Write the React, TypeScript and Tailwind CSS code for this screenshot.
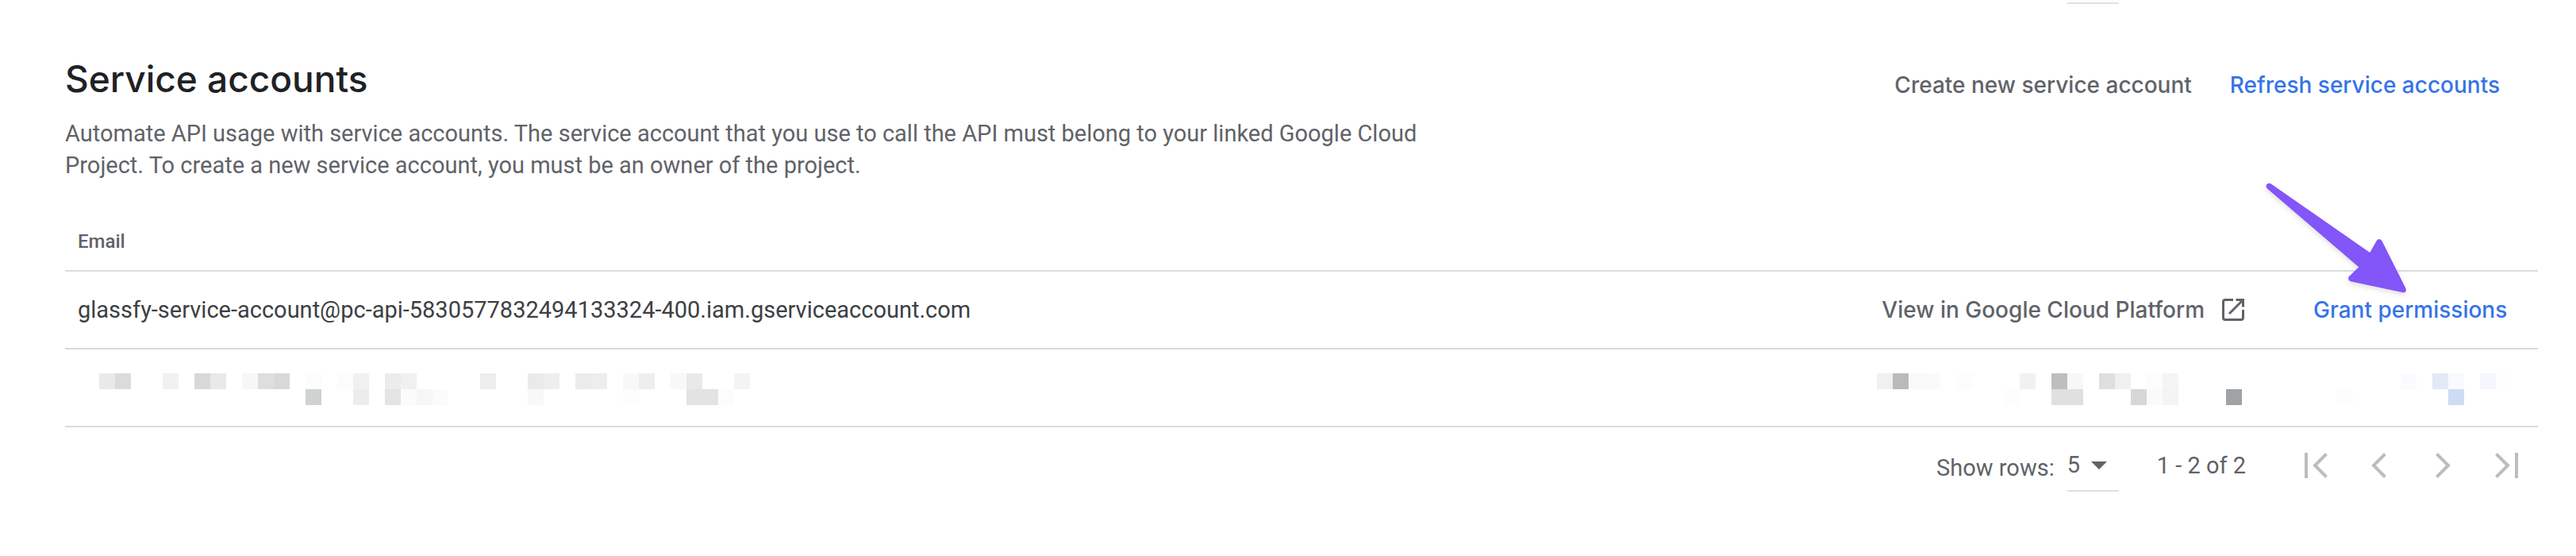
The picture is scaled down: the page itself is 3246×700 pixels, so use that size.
import type { ReactNode } from 'react';

type Block = [col: number, row: number, color: string];

const CELL = 20;

const emailBlocks: Block[] = [
  [0, 0, '#e9e9e9'], [1, 0, '#dadcdb'], [4, 0, '#f1f1f1'], [6, 0, '#d8d8d8'],
  [7, 0, '#e9e9e9'], [9, 0, '#f7f7f7'], [10, 0, '#dedede'], [11, 0, '#d7d9d8'],
  [13, 0, '#fbfdfc'], [15, 0, '#fcfcfc'], [16, 0, '#f1f1f1'], [18, 0, '#ececec'],
  [19, 0, '#f0f0f0'], [24, 0, '#ededed'], [27, 0, '#e9ebea'], [28, 0, '#eeeeee'],
  [30, 0, '#ececec'], [31, 0, '#ededed'], [33, 0, '#f8f8f8'], [34, 0, '#eeeeee'],
  [36, 0, '#f8f8f8'], [37, 0, '#e9e9e9'], [40, 0, '#f4f4f4'],
  [13, 1, '#d0d1d3'], [16, 1, '#ebeded'], [18, 1, '#e4e4e4'], [19, 1, '#fafcfb'],
  [20, 1, '#f6f6f6'], [21, 1, '#fbfbfb'], [27, 1, '#f8f8f8'], [33, 1, '#fdfdfd'],
  [37, 1, '#e3e3e3'], [38, 1, '#e3e3e3'], [39, 1, '#fcfcfc'],
];

const viewBlocks: Block[] = [
  [0, 0, '#f0f0f0'], [1, 0, '#bababb'], [2, 0, '#f9f9f9'], [3, 0, '#f9fbfa'],
  [5, 0, '#fcfcfc'], [9, 0, '#f1f1f1'], [11, 0, '#bdbebf'], [12, 0, '#f7f7f7'],
  [14, 0, '#dfdfdf'], [15, 0, '#f0f0f0'], [17, 0, '#fcfcfc'], [18, 0, '#f5f5f5'],
  [8, 1, '#fdfdfd'], [11, 1, '#e0e0e0'], [12, 1, '#dfe1e0'], [16, 1, '#d6d7d9'],
  [17, 1, '#fafafa'], [18, 1, '#f4f4f4'], [22, 1, '#9fa3a6'],
];

const grantBlocks: Block[] = [
  [4, 0, '#fafbfe'], [6, 0, '#e4e9f6'], [7, 0, '#f8faff'], [9, 0, '#f4f7fe'],
  [10, 0, '#fdfeff'], [0, 1, '#fdfdfd'], [7, 1, '#cddcf4'],
];

function Redacted({ blocks, cols }: { blocks: Block[]; cols: number }) {
  return (
    <svg width={cols * CELL} height={2 * CELL} shapeRendering="crispEdges" aria-hidden="true">
      {blocks.map(([col, row, color]) => (
        <rect key={`${col}-${row}`} x={col * CELL} y={row * CELL} width={CELL} height={CELL} fill={color} />
      ))}
    </svg>
  );
}

function OpenInNewIcon() {
  return (
    <svg width="28" height="28" viewBox="0 0 28 28" fill="none" stroke="currentColor" strokeWidth="3" aria-hidden="true">
      <path d="M14 1.5H4Q1.5 1.5 1.5 4V24Q1.5 26.5 4 26.5H24Q26.5 26.5 26.5 24V14" />
      <path d="M17.5 1.5H26.5V10.5M26 2L9 19" />
    </svg>
  );
}

function PagerButton({ label, children }: { label: string; children: ReactNode }) {
  return (
    <button type="button" aria-label={label} className="flex h-20 w-20 items-center justify-center text-[#bdbdbd]">
      <svg width="32" height="32" viewBox="0 0 32 32" fill="none" stroke="currentColor" strokeWidth="4" aria-hidden="true">
        {children}
      </svg>
    </button>
  );
}

function ArrowCallout() {
  return (
    <svg
      className="pointer-events-none absolute -top-[121px] right-[148px] drop-shadow-md"
      width="210"
      height="160"
      viewBox="0 0 210 160"
      aria-hidden="true"
    >
      <path
        fill="#8256f8"
        d="M22.5 11L146.3 97L154.8 82Q158 78 161.3 82L191.5 142Q193 147.5 188 147.3L122 133.3Q117.5 131 120 127L132.3 115.3L17 16.5Q14 13 17 10.5Q19.5 9 22.5 11Z"
      />
    </svg>
  );
}

export default function App() {
  return (
    <main className="bg-white pr-12 pl-[82px] font-['Roboto',sans-serif] text-[29px] leading-10 text-[#5f6368]">
      {/* Bottom edge of the rows selector from the previous table */}
      <div className="flex justify-end pr-[528px]">
        <div className="h-[5px] w-[65px] border-b-2 border-[#e0e0e0]" />
      </div>

      <header className="mt-[66px] flex items-start justify-between">
        <div>
          <h1 className="font-['Inter',sans-serif] text-[46px] leading-14 font-medium text-[#202124]">Service accounts</h1>
          <p className="mt-[21px] max-w-[1720px]">
            Automate API usage with service accounts. The service account that you use to call the API must belong to
            your linked Google Cloud Project. To create a new service account, you must be an owner of the project.
          </p>
        </div>
        <div className="mt-4 flex gap-12 pr-12 font-['Inter',sans-serif] text-[28px] font-medium">
          <button type="button">Create new service account</button>
          <button type="button" className="text-[#3573e8]">Refresh service accounts</button>
        </div>
      </header>

      <table className="mt-10 w-full border-collapse text-left">
        <thead>
          <tr className="border-b-2 border-[#dadbe1]">
            <th className="px-4 py-5 text-2xl font-medium">Email</th>
            <th aria-label="View" />
            <th aria-label="Permissions" className="w-[370px]" />
          </tr>
        </thead>
        <tbody>
          <tr className="border-b-2 border-[#dadbe1]">
            <td className="h-[98px] px-4 text-[#3c4043]">
              glassfy-service-account@pc-api-5830577832494133324-400.iam.gserviceaccount.com
            </td>
            <td>
              <a href="#cloud" className="flex items-center justify-end gap-[22px] font-['Inter',sans-serif] text-[28px] font-medium">
                View in Google Cloud Platform
                <OpenInNewIcon />
              </a>
            </td>
            <td className="relative pl-[87px]">
              <button type="button" className="font-['Inter',sans-serif] text-[28px] font-medium text-[#3573e8]">
                Grant permissions
              </button>
              <ArrowCallout />
            </td>
          </tr>
          <tr className="border-b-2 border-[#dadbe1]">
            <td className="pt-[30px] pb-[26px] pl-[43px]">
              <Redacted blocks={emailBlocks} cols={41} />
            </td>
            <td className="pt-[30px] pr-[3px] pb-[26px]">
              <div className="flex justify-end">
                <Redacted blocks={viewBlocks} cols={23} />
              </div>
            </td>
            <td className="pt-[30px] pb-[26px] pl-[117px]">
              <Redacted blocks={grantBlocks} cols={12} />
            </td>
          </tr>
        </tbody>
      </table>

      <footer className="flex h-24 items-center justify-end">
        <label htmlFor="rows" className="pt-1.5">Show rows:</label>
        <div className="relative ml-4">
          <select id="rows" defaultValue="5" className="block h-[66px] w-[65px] appearance-none border-b-2 border-[#e0e0e0]">
            <option>5</option>
            <option>10</option>
            <option>25</option>
          </select>
          <svg className="pointer-events-none absolute top-[28px] left-[30px]" width="20" height="10" aria-hidden="true">
            <path d="M0 0H20L10 10Z" fill="currentColor" />
          </svg>
        </div>
        <span className="ml-12">1 - 2 of 2</span>
        <nav aria-label="Pagination" className="ml-12 flex">
          <PagerButton label="First page">
            <path d="M4 0V32M29.5 1.5L15 16L29.5 30.5" />
          </PagerButton>
          <PagerButton label="Previous page">
            <path d="M23.5 1.5L9 16L23.5 30.5" />
          </PagerButton>
          <PagerButton label="Next page">
            <path d="M8.5 1.5L23 16L8.5 30.5" />
          </PagerButton>
          <PagerButton label="Last page">
            <path d="M3.5 1.5L18 16L3.5 30.5M29 0V32" />
          </PagerButton>
        </nav>
      </footer>
    </main>
  );
}
